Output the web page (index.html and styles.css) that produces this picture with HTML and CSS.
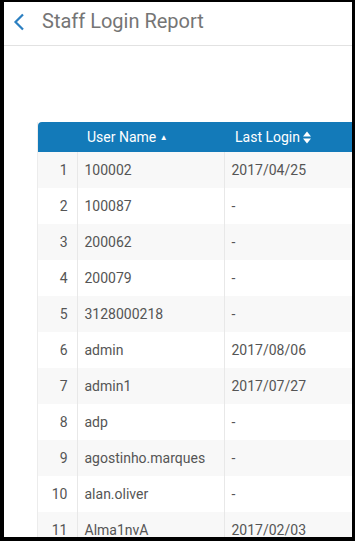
FILE: index.html
```html
<!DOCTYPE html>
<html lang="en">
<head>
    <meta charset="UTF-8">
    <meta name="viewport" content="width=device-width, initial-scale=1.0">
    <title>Staff Login Report</title>
    <link rel="stylesheet" href="styles.css">
</head>
<body>
    <div class="frame">
        <header class="topbar">
            <a class="back" href="#">
                <svg width="12" height="18" viewBox="0 0 12 18">
                    <path d="M10 1.5 L2.5 9 L10 16.5" fill="none" stroke="#2b7fc1" stroke-width="2.2"/>
                </svg>
            </a>
            <h1>Staff Login Report</h1>
        </header>

        <div class="content">
            <table class="report">
                <thead>
                    <tr>
                        <th class="idx"></th>
                        <th class="user">User Name <span class="sort">&#9650;</span></th>
                        <th class="last">Last Login
                            <svg class="both" width="8" height="13" viewBox="0 0 8 13">
                                <path d="M0 5.5 L4 0.5 L8 5.5 Z M0 7.5 L4 12.5 L8 7.5 Z" fill="#fff"/>
                            </svg>
                        </th>
                        <th class="rest"></th>
                    </tr>
                </thead>
                <tbody id="rows"></tbody>
            </table>
        </div>
    </div>

    <script>
        const rows=document.getElementById('rows');
        const staff=[
            ['100002','2017/04/25'],
            ['100087','-'],
            ['200062','-'],
            ['200079','-'],
            ['3128000218','-'],
            ['admin','2017/08/06'],
            ['admin1','2017/07/27'],
            ['adp','-'],
            ['agostinho.marques','-'],
            ['alan.oliver','-'],
            ['Alma1nvA','2017/02/03']
        ];
        staff.forEach((s,i)=>{
            const tr=document.createElement('tr');
            tr.innerHTML=`<td class="idx">${i+1}</td><td>${s[0]}</td><td>${s[1]}</td><td></td>`;
            rows.appendChild(tr);
        });
    </script>
</body>
</html>
```

FILE: styles.css
```css
body {
  margin: 0;
  font-family: Roboto, 'Liberation Sans', sans-serif;
  background: #fff;
}
.frame {
  height: 541px;
  box-sizing: border-box;
  border-style: solid;
  border-color: #000;
  border-width: 2px 3px 4px 4px;
  overflow: hidden;
}
.topbar {
  height: 44px;
  border-bottom: 1px solid #e2e2e2;
  display: flex;
  align-items: center;
  box-sizing: border-box;
  padding: 0 0 4px 9px;
}
.back {
  display: flex;
  width: 29px;
}
.topbar h1 {
  margin: 0;
  font-size: 20px;
  font-weight: 400;
  color: #757575;
  margin-top: -1px;
}
.content {
  padding: 76px 0 0 33px;
}
.report {
  border-collapse: collapse;
  width: 420px;
  font-size: 14px;
  color: #555;
  border-left: 1px solid #ececec;
}
.report thead tr {
  background: #137ab9;
  height: 30px;
}
.report th {
  color: #fff;
  font-weight: 400;
  text-align: left;
  padding: 0 0 0 10px;
  white-space: nowrap;
}
.report th:first-child {
  border-top-left-radius: 4px;
}
.sort {
  font-size: 8px;
  vertical-align: 2px;
}
.both {
  vertical-align: -2px;
}
.report th.idx { width: 39px; padding: 0; }
.report th.user { width: 137px; }
.report th.last { width: 140px; padding-left: 11px; }
.report tbody tr {
  height: 36px;
}
.report tbody tr:nth-child(odd) {
  background: #f8f8f8;
}
.report td {
  padding: 0 0 0 7px;
  border-right: 1px solid #e8e8e8;
  white-space: nowrap;
}
.report td.idx {
  text-align: right;
  padding: 0 9px 0 0;
}
```
